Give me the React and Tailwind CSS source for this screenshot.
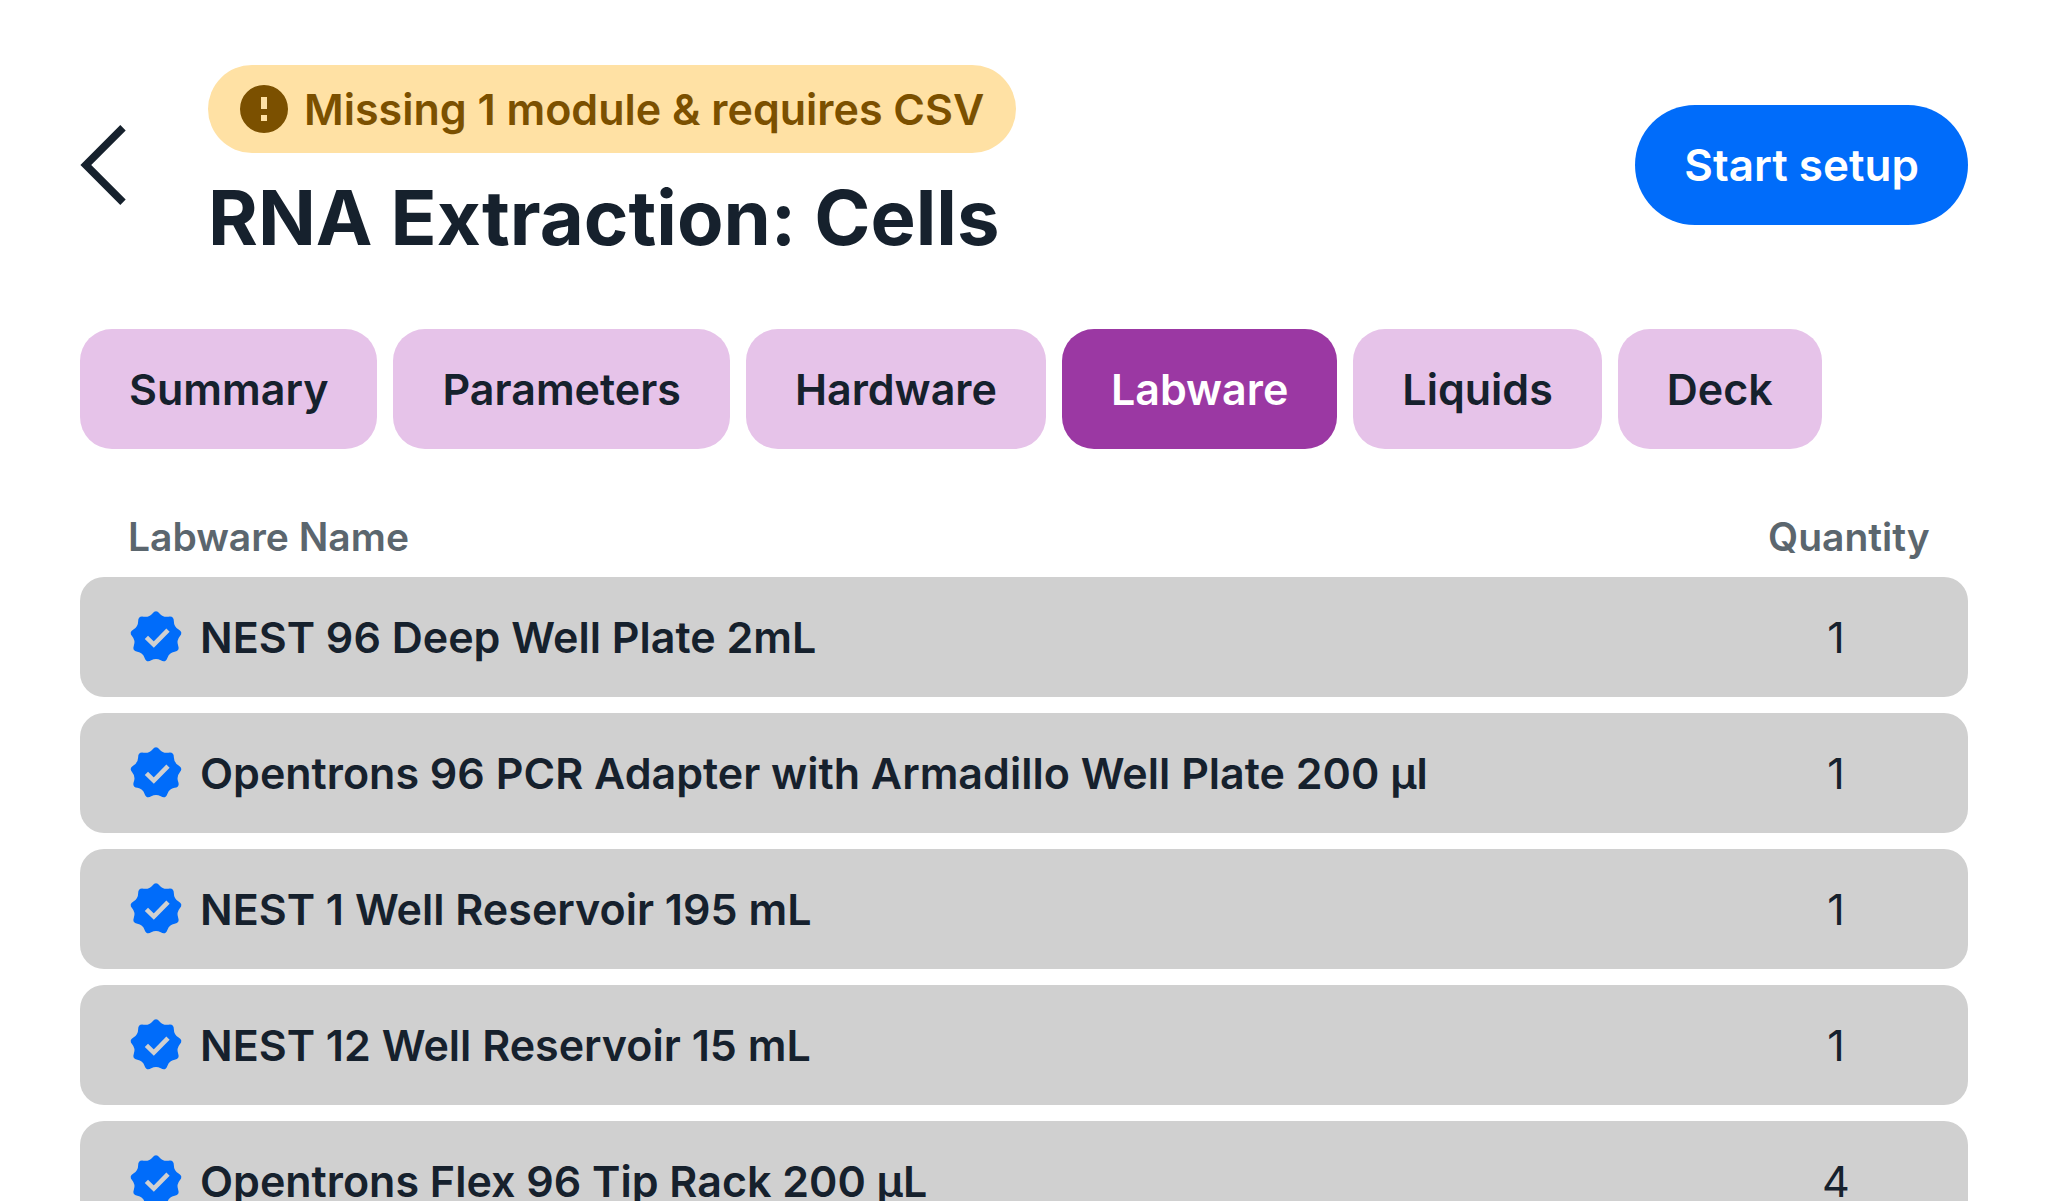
const TABS = ['Summary', 'Parameters', 'Hardware', 'Labware', 'Liquids', 'Deck']

const LABWARE = [
  { name: 'NEST 96 Deep Well Plate 2mL', quantity: 1 },
  { name: 'Opentrons 96 PCR Adapter with Armadillo Well Plate 200 µl', quantity: 1 },
  { name: 'NEST 1 Well Reservoir 195 mL', quantity: 1 },
  { name: 'NEST 12 Well Reservoir 15 mL', quantity: 1 },
  { name: 'Opentrons Flex 96 Tip Rack 200 µL', quantity: 4 },
]

// nine-lobed badge outline, centred on 28,28
function badgePath() {
  const vertices = Array.from({ length: 18 }, (_, i) => {
    const angle = (i * Math.PI) / 9
    const radius = i % 2 === 0 ? 27.8 : 20.6
    return [28 + radius * Math.sin(angle), 28 - radius * Math.cos(angle)]
  })
  const middle = (a, b) => [(a[0] + b[0]) / 2, (a[1] + b[1]) / 2]
  const start = middle(vertices[17], vertices[0])
  const curves = vertices.map((v, i) => `Q${v.join(' ')} ${middle(v, vertices[(i + 1) % 18]).join(' ')}`)
  return `M${start.join(' ')}${curves.join('')}Z`
}

const BADGE_PATH = badgePath()

function VerifiedIcon() {
  return (
    <svg viewBox="0 0 56 56" className="size-14 shrink-0" aria-hidden="true">
      <path d={BADGE_PATH} fill="#006cfa" />
      <path d="M18.4 28.4l7.4 7.2L40 21.2" fill="none" stroke="#d0d0d0" strokeWidth="4.6" />
    </svg>
  )
}

function AlertIcon() {
  return (
    <svg viewBox="0 0 48 48" className="size-12 shrink-0" fill="currentColor" aria-hidden="true">
      <path
        fillRule="evenodd"
        d="M24 0a24 24 0 1 0 0 48a24 24 0 1 0 0-48zM21 12h6v12h-6zM21 30h6v6h-6z"
      />
    </svg>
  )
}

function Header() {
  return (
    <header className="flex items-center justify-between">
      <div className="flex items-center gap-20">
        <button type="button" aria-label="Back">
          <svg viewBox="0 0 48 80" className="h-20 w-12" fill="none" aria-hidden="true">
            <path d="M43 2.7L5.8 40L43 77.3" stroke="currentColor" strokeWidth="7.6" />
          </svg>
        </button>
        <div className="flex flex-col items-start gap-4">
          <div className="flex items-center gap-4 rounded-full bg-[#ffe1a4] px-8 py-4 text-[#7b5000]">
            <AlertIcon />
            <p className="text-[43px] leading-14 font-semibold">Missing 1 module &amp; requires CSV</p>
          </div>
          <h1 className="text-[76px] leading-24 font-bold">RNA Extraction: Cells</h1>
        </div>
      </div>
      <button
        type="button"
        className="rounded-full bg-[#006cfa] px-[49px] py-8 text-[44px] leading-14 font-semibold text-white"
      >
        Start setup
      </button>
    </header>
  )
}

function Tabs({ active }) {
  return (
    <nav className="mt-16 flex gap-4">
      {TABS.map((tab) => (
        <button
          key={tab}
          type="button"
          aria-pressed={tab === active}
          className={`rounded-4xl px-[49px] py-8 text-[43px] leading-14 font-semibold ${
            tab === active ? 'bg-[#9b38a3] text-white' : 'bg-[#e6c3e9]'
          }`}
        >
          {tab}
        </button>
      ))}
    </nav>
  )
}

function LabwareTable() {
  return (
    <table className="mt-12 w-full border-separate border-spacing-x-0 border-spacing-y-4">
      <thead>
        <tr className="text-left text-[39px] leading-12 text-[#5b666e]">
          <th className="pl-12 font-semibold">Labware Name</th>
          <th className="w-[200px] font-semibold">Quantity</th>
        </tr>
      </thead>
      <tbody>
        {LABWARE.map((item) => (
          <tr key={item.name} className="bg-[#d0d0d0] text-[43px] leading-14">
            <td className="rounded-l-3xl py-8 pl-12 font-semibold">
              <div className="flex items-center gap-4">
                <VerifiedIcon />
                {item.name}
              </div>
            </td>
            <td className="rounded-r-3xl py-8 pr-16 text-center">{item.quantity}</td>
          </tr>
        ))}
      </tbody>
    </table>
  )
}

export default function App() {
  return (
    <main className="min-h-screen bg-white px-20 pt-[65px] font-['Inter',sans-serif] text-[#16212d]">
      <Header />
      <Tabs active="Labware" />
      <LabwareTable />
    </main>
  )
}
